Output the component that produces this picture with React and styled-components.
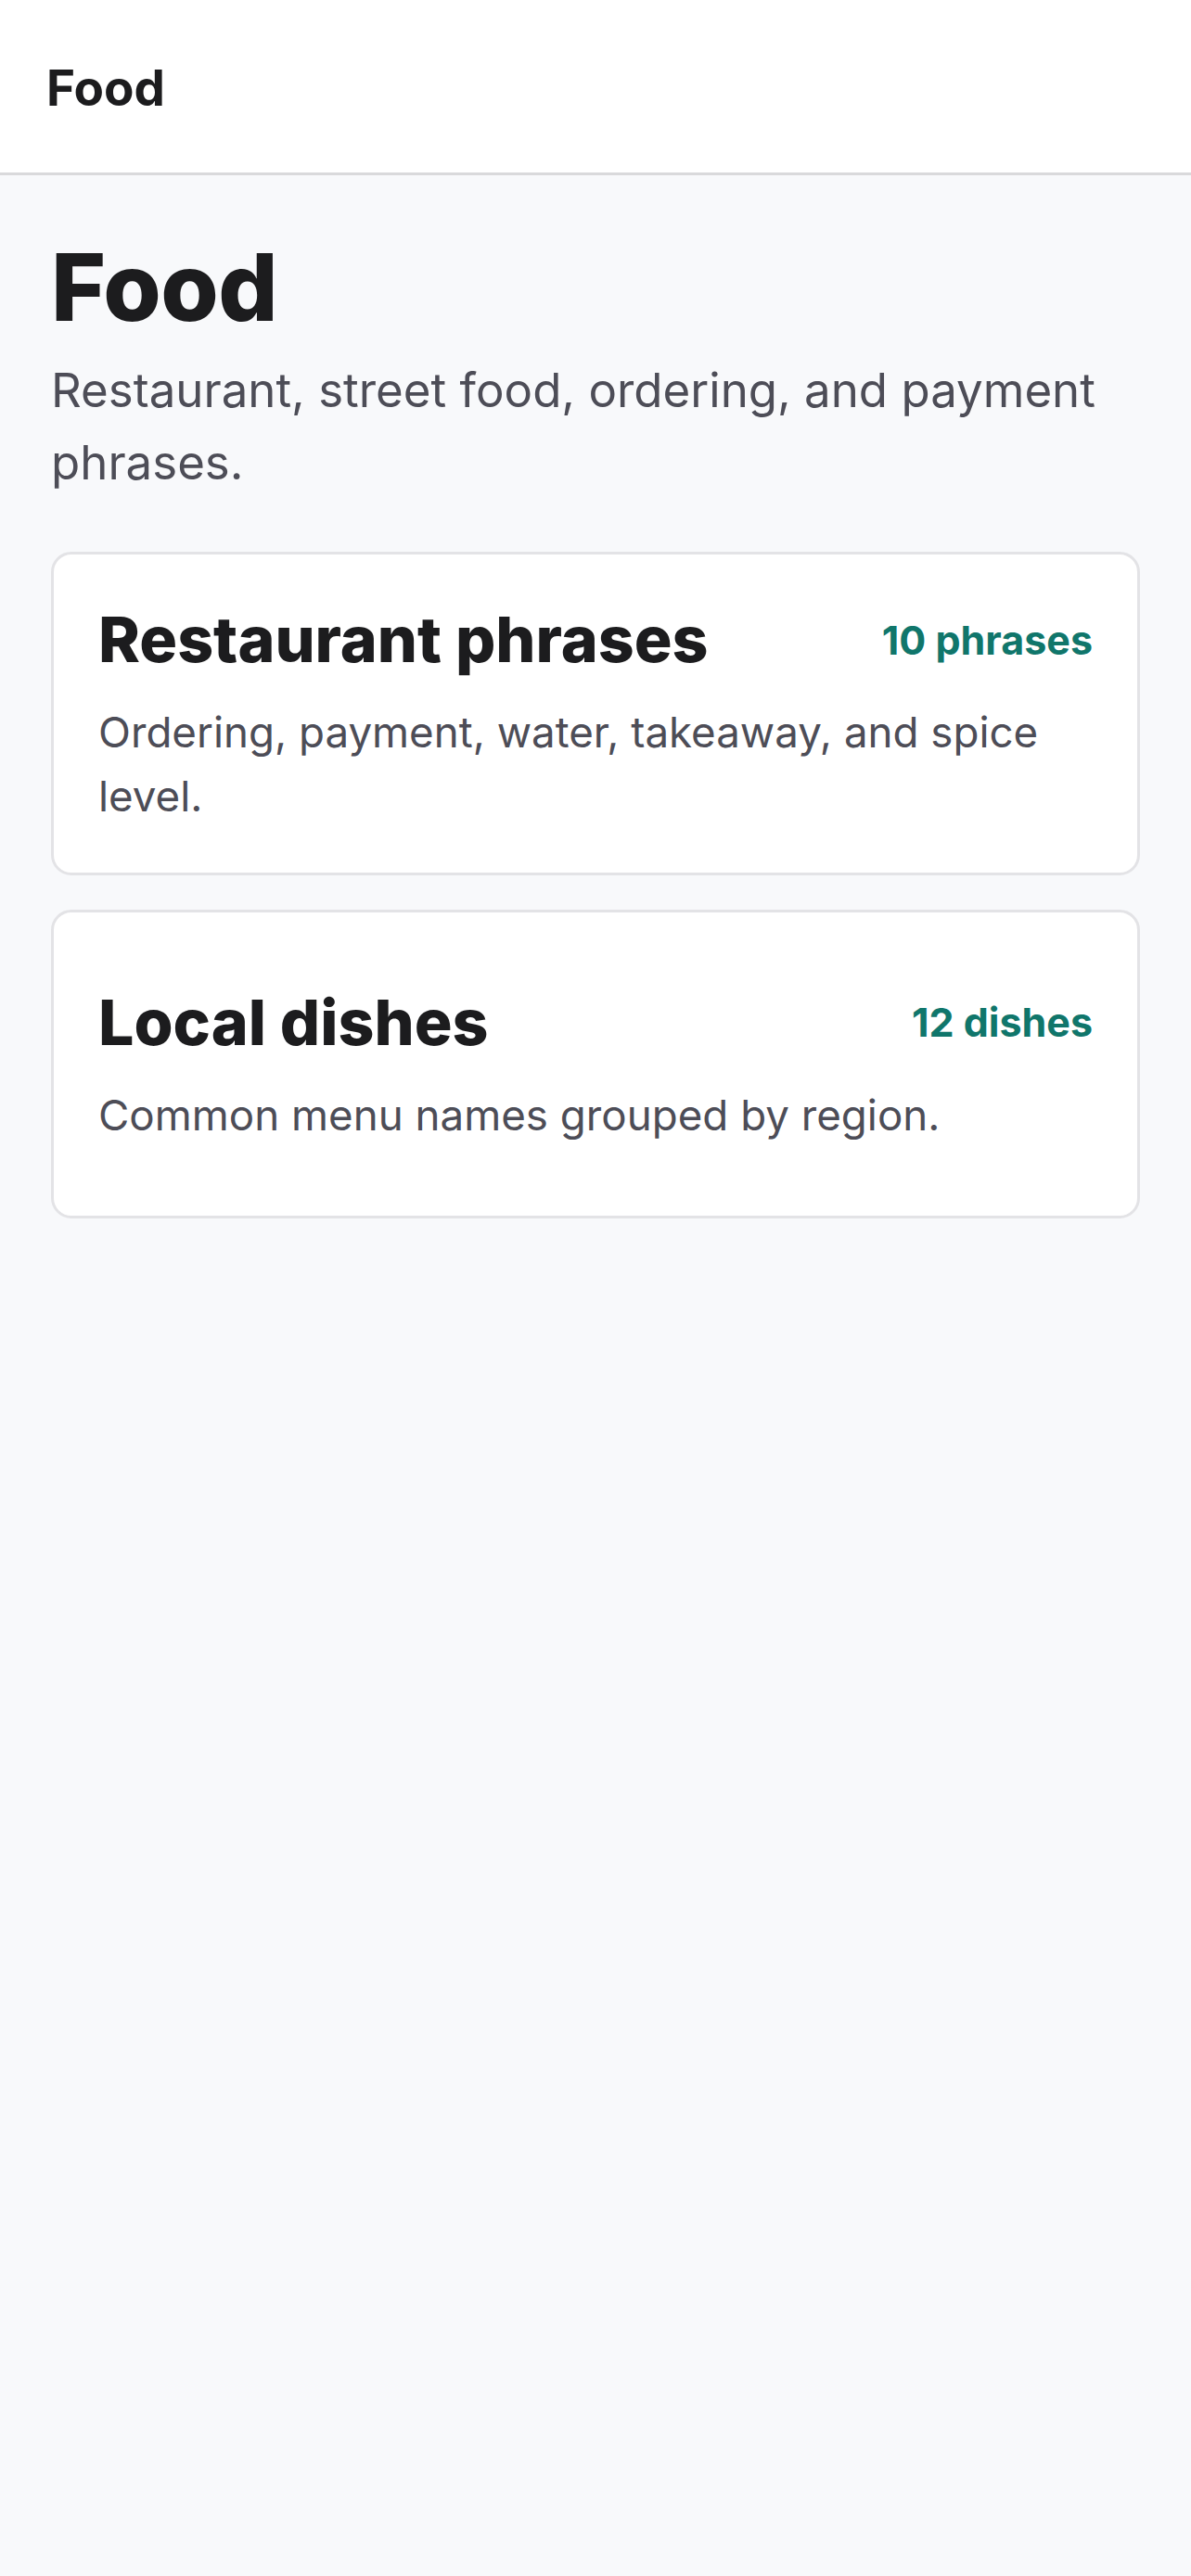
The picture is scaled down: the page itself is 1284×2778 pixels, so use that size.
import React from "react";
import styled, { createGlobalStyle } from "styled-components";

const GlobalStyle = createGlobalStyle`
  * { box-sizing: border-box; }
  html, body {
    margin: 0;
    padding: 0;
    background: #f8f9fb;
    font-family: Inter, "Noto Sans", sans-serif;
    color: #1c1c1e;
    -webkit-font-smoothing: antialiased;
  }
`;

const Page = styled.div`
  min-height: 2778px;
  background: #f8f9fb;
`;

const TopBar = styled.header`
  height: 189px;
  background: #ffffff;
  border-bottom: 3px solid #d9d9db;
  display: flex;
  align-items: center;
  padding: 4px 50px 0;
`;

const BarTitle = styled.span`
  font-size: 53px;
  font-weight: 700;
`;

const Main = styled.main`
  padding: 66px 55px 0;
`;

const Heading = styled.h1`
  margin: 0;
  font-size: 101px;
  line-height: 109px;
  font-weight: 800;
  letter-spacing: -0.5px;
`;

const Lead = styled.p`
  margin: 18px 0 0;
  font-size: 51px;
  line-height: 78px;
  color: #4d4d57;
`;

const List = styled.div`
  margin-top: 57px;
  display: flex;
  flex-direction: column;
  gap: 37px;
`;

const Card = styled.article`
  min-height: 333px;
  background: #ffffff;
  border: 3px solid #e3e3e6;
  border-radius: 22px;
  padding: 52px 48px 48px;
  display: flex;
  flex-direction: column;
  justify-content: center;
  gap: 26px;
`;

const CardHead = styled.div`
  display: flex;
  align-items: center;
  justify-content: space-between;
  gap: 24px;
`;

const CardTitle = styled.h2`
  margin: 0;
  font-size: 68px;
  line-height: 79px;
  font-weight: 800;
  letter-spacing: 0;
`;

const Count = styled.span`
  font-size: 43px;
  font-weight: 700;
  color: #10766b;
  white-space: nowrap;
`;

const CardText = styled.p`
  margin: 0;
  font-size: 45.7px;
  line-height: 69px;
  color: #4d4d57;
`;

const sections = [
  {
    title: "Restaurant phrases",
    count: "10 phrases",
    text: "Ordering, payment, water, takeaway, and spice level.",
  },
  {
    title: "Local dishes",
    count: "12 dishes",
    text: "Common menu names grouped by region.",
  },
];

export default function App() {
  return (
    <Page>
      <GlobalStyle />
      <TopBar>
        <BarTitle>Food</BarTitle>
      </TopBar>
      <Main>
        <Heading>Food</Heading>
        <Lead>Restaurant, street food, ordering, and payment phrases.</Lead>
        <List>
          {sections.map((s) => (
            <Card key={s.title}>
              <CardHead>
                <CardTitle>{s.title}</CardTitle>
                <Count>{s.count}</Count>
              </CardHead>
              <CardText>{s.text}</CardText>
            </Card>
          ))}
        </List>
      </Main>
    </Page>
  );
}
